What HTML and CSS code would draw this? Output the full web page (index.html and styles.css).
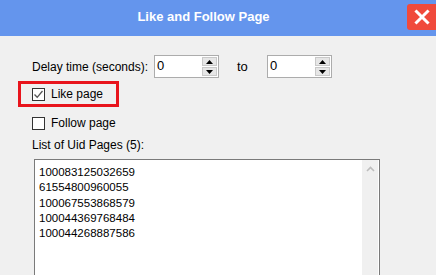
FILE: index.html
```html
<!DOCTYPE html>
<html lang="en">
<head>
  <meta charset="UTF-8" />
  <title>Like and Follow Page</title>
  <link rel="stylesheet" href="styles.css">
</head>
<body>
  <div class="titlebar">
    <div class="title">Like and Follow Page</div>
    <div class="close">
      <svg width="16" height="16" viewBox="0 0 16 16"><path d="M2.5 2.5 L13.5 13.5 M13.5 2.5 L2.5 13.5" stroke="#fff" stroke-width="3" stroke-linecap="square"/></svg>
    </div>
  </div>

  <div class="content">
    <div class="row delay">
      <span class="label">Delay time (seconds):</span>
      <div class="spin">
        <span class="value">0</span>
        <div class="spin-btns">
          <span class="btn"><svg width="7" height="4" viewBox="0 0 7 4"><path d="M3.5 0 L7 4 L0 4 Z" fill="#000"/></svg></span>
          <span class="btn"><svg width="7" height="4" viewBox="0 0 7 4"><path d="M0 0 L7 0 L3.5 4 Z" fill="#000"/></svg></span>
        </div>
      </div>
      <span class="to">to</span>
      <div class="spin">
        <span class="value">0</span>
        <div class="spin-btns">
          <span class="btn"><svg width="7" height="4" viewBox="0 0 7 4"><path d="M3.5 0 L7 4 L0 4 Z" fill="#000"/></svg></span>
          <span class="btn"><svg width="7" height="4" viewBox="0 0 7 4"><path d="M0 0 L7 0 L3.5 4 Z" fill="#000"/></svg></span>
        </div>
      </div>
    </div>

    <div class="highlight">
      <label class="check">
        <span class="box"><svg width="11" height="11" viewBox="0 0 11 11"><path d="M1.5 5.5 L4.2 8.3 L9.5 2" fill="none" stroke="#555" stroke-width="1.3"/></svg></span>
        Like page
      </label>
    </div>

    <label class="check follow">
      <span class="box"></span>
      Follow page
    </label>

    <div class="list-label">List of Uid Pages (5):</div>
    <div class="list">
      <div class="lines">
        <div>100083125032659</div>
        <div>61554800960055</div>
        <div>100067553868579</div>
        <div>100044369768484</div>
        <div>100044268887586</div>
      </div>
      <div class="scrollbar">
        <svg width="9" height="6" viewBox="0 0 9 6"><path d="M1 5 L4.5 1.5 L8 5" fill="none" stroke="#bdbdbd" stroke-width="1.6"/></svg>
      </div>
    </div>
  </div>
</body>
</html>
```

FILE: styles.css
```css
body {
  margin: 0;
  background-color: #f0f0f0;
  font-family: "Liberation Sans", Arial, sans-serif;
  font-size: 12px;
  color: #000;
  width: 436px;
  height: 275px;
  overflow: hidden;
}
.titlebar {
  height: 36px;
  background-color: #6495ed;
  display: flex;
  align-items: flex-start;
}
.title {
  flex: 1;
  text-align: center;
  color: #fff;
  font-weight: bold;
  font-size: 13px;
  line-height: 34px;
}
.close {
  width: 29px;
  height: 26px;
  margin-top: 4px;
  background-color: #f04a3c;
  border-radius: 3px 0 0 3px;
  display: flex;
  align-items: center;
  justify-content: center;
}
.content {
  padding: 19px 0 0 32px;
}
.row {
  display: flex;
  align-items: center;
}
.label {
  width: 122px;
}
.spin {
  width: 63px;
  height: 21px;
  border: 1px solid #acacac;
  background-color: #fff;
  display: flex;
  justify-content: space-between;
}
.value {
  padding: 2px 0 0 2px;
  font-size: 13px;
}
.spin-btns {
  width: 15px;
  margin: 1px 1px 1px 0;
  display: flex;
  flex-direction: column;
  gap: 1px;
}
.btn {
  flex: 1;
  background-color: #e6e6e6;
  border: 1px solid #c9c9c9;
  display: flex;
  align-items: center;
  justify-content: center;
}
.to {
  width: 48px;
  padding-left: 18px;
  box-sizing: border-box;
  font-size: 13px;
}
.highlight {
  margin: 3px 0 0 -14px;
  width: 84px;
  height: 20px;
  border: 3px solid #e8141c;
  display: flex;
  align-items: center;
  padding-left: 11px;
}
.check {
  display: flex;
  align-items: center;
  gap: 6px;
  font-size: 12px;
}
.box {
  width: 11px;
  height: 11px;
  border: 1px solid #333;
  background-color: #fff;
  display: flex;
}
.follow {
  margin-top: 9px;
}
.list-label {
  margin-top: 8px;
}
.list {
  margin: 7px 0 0 2px;
  width: 344px;
  height: 130px;
  border: 1px solid #7a7a7a;
  background-color: #fff;
  display: flex;
  justify-content: space-between;
}
.lines {
  padding: 5px 0 0 4px;
  font-size: 11.5px;
  line-height: 15.3px;
}
.scrollbar {
  width: 17px;
  background-color: #f0f0f0;
  border-right: 1px solid #fff;
  display: flex;
  justify-content: center;
  padding-top: 6px;
  box-sizing: border-box;
}
```
